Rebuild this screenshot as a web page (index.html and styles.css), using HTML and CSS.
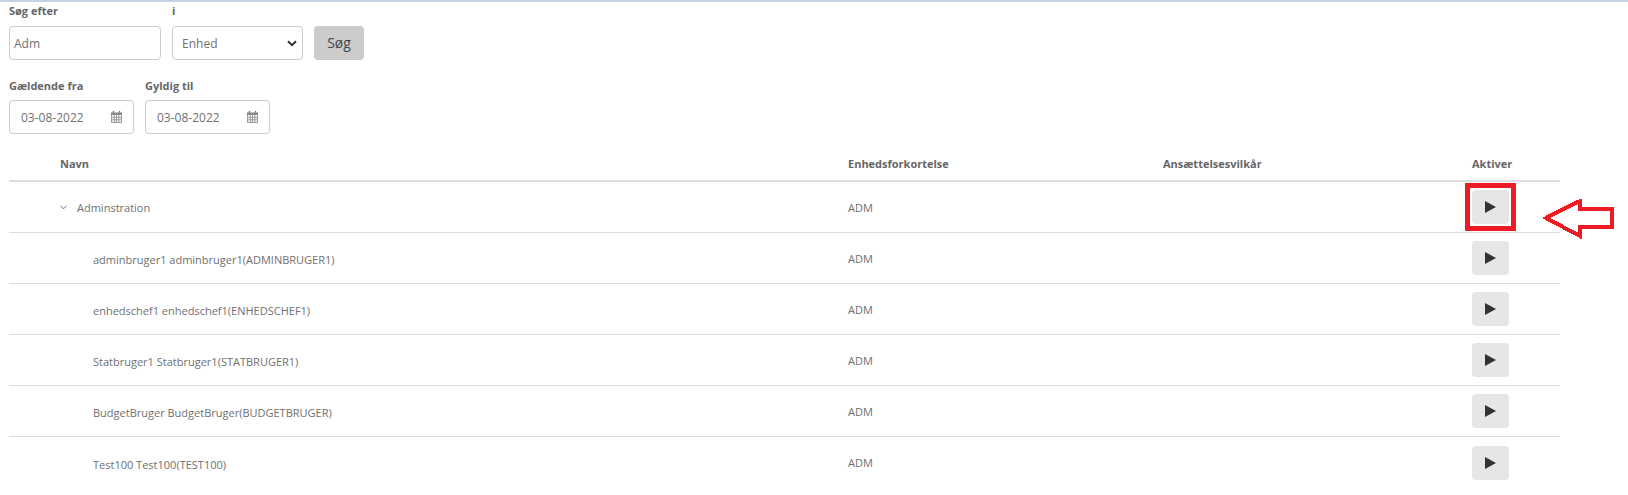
FILE: index.html
```html
<!DOCTYPE html>
<html>

<head>
  <meta charset="utf-8">
  <meta name="viewport" content="width=device-width">
  <title>Søg</title>
  <link rel="stylesheet" href="styles.css">
</head>

<body>
  <div class="page">
    <div class="filters">
      <div class="field">
        <label>Søg efter</label>
        <div class="box search-box">Adm</div>
      </div>
      <div class="field">
        <label>i</label>
        <div class="box select-box">
          <span>Enhed</span>
          <svg width="10" height="7" viewBox="0 0 10 7"><path d="M1 1.2l4 4 4-4" fill="none" stroke="#333" stroke-width="2"/></svg>
        </div>
      </div>
      <div class="search-btn">Søg</div>
    </div>

    <div class="filters dates">
      <div class="field">
        <label>Gældende fra</label>
        <div class="box date-box">
          <span>03-08-2022</span>
          <svg class="cal" width="11" height="12" viewBox="0 0 11 12"><path d="M2.5 0v2M8.5 0v2" stroke="#777" stroke-width="1.4"/><rect x="0" y="1.5" width="11" height="2.5" fill="#888"/><path d="M.5 4v7.500h10V4M.5 6.300h10M.5 8.800h10M3.200 4v7.500M5.500 4v7.500M7.800 4v7.500" fill="none" stroke="#999"/></svg>
        </div>
      </div>
      <div class="field">
        <label>Gyldig til</label>
        <div class="box date-box">
          <span>03-08-2022</span>
          <svg class="cal" width="11" height="12" viewBox="0 0 11 12"><path d="M2.5 0v2M8.5 0v2" stroke="#777" stroke-width="1.4"/><rect x="0" y="1.5" width="11" height="2.5" fill="#888"/><path d="M.5 4v7.500h10V4M.5 6.300h10M.5 8.800h10M3.200 4v7.500M5.500 4v7.500M7.800 4v7.500" fill="none" stroke="#999"/></svg>
        </div>
      </div>
    </div>

    <div class="table">
      <div class="row head">
        <div class="name">Navn</div>
        <div class="unit">Enhedsforkortelse</div>
        <div class="terms">Ansættelsesvilkår</div>
        <div class="act">Aktiver</div>
      </div>
      <div class="row">
        <div class="name parent">
          <svg width="7" height="5" viewBox="0 0 7 5"><path d="M.5 .8l3 3 3-3" fill="none" stroke="#666"/></svg>
          Adminstration
        </div>
        <div class="unit">ADM</div>
        <div class="terms"></div>
        <div class="act">
          <div class="play"><svg width="11" height="12" viewBox="0 0 11 12"><path d="M0 0l11 6-11 6z" fill="#333"/></svg></div>
          <div class="marker"></div>
        </div>
      </div>
      <div class="row">
        <div class="name child">adminbruger1 adminbruger1(ADMINBRUGER1)</div>
        <div class="unit">ADM</div>
        <div class="terms"></div>
        <div class="act"><div class="play"><svg width="11" height="12" viewBox="0 0 11 12"><path d="M0 0l11 6-11 6z" fill="#333"/></svg></div></div>
      </div>
      <div class="row">
        <div class="name child">enhedschef1 enhedschef1(ENHEDSCHEF1)</div>
        <div class="unit">ADM</div>
        <div class="terms"></div>
        <div class="act"><div class="play"><svg width="11" height="12" viewBox="0 0 11 12"><path d="M0 0l11 6-11 6z" fill="#333"/></svg></div></div>
      </div>
      <div class="row">
        <div class="name child">Statbruger1 Statbruger1(STATBRUGER1)</div>
        <div class="unit">ADM</div>
        <div class="terms"></div>
        <div class="act"><div class="play"><svg width="11" height="12" viewBox="0 0 11 12"><path d="M0 0l11 6-11 6z" fill="#333"/></svg></div></div>
      </div>
      <div class="row">
        <div class="name child">BudgetBruger BudgetBruger(BUDGETBRUGER)</div>
        <div class="unit">ADM</div>
        <div class="terms"></div>
        <div class="act"><div class="play"><svg width="11" height="12" viewBox="0 0 11 12"><path d="M0 0l11 6-11 6z" fill="#333"/></svg></div></div>
      </div>
      <div class="row last">
        <div class="name child">Test100 Test100(TEST100)</div>
        <div class="unit">ADM</div>
        <div class="terms"></div>
        <div class="act"><div class="play"><svg width="11" height="12" viewBox="0 0 11 12"><path d="M0 0l11 6-11 6z" fill="#333"/></svg></div></div>
      </div>
    </div>
  </div>

  <svg class="arrow" width="72" height="40" viewBox="0 0 72 40">
    <path d="M3 19L37 2v8h32v18H37v9z" fill="#fff" stroke="#ed1c24" stroke-width="4" shape-rendering="crispEdges"/>
  </svg>
</body>

</html>
```

FILE: styles.css
```css
* {
  margin: 0;
  box-sizing: border-box;
}

body {
  margin: 0;
  font-family: "Open Sans", sans-serif;
  font-size: 11px;
  color: #707070;
  background: #fff;
}

.page {
  border-top: 2px solid #c5d3e6;
  padding: 0 68px 0 9px;
}

/* filtre */
.filters {
  display: flex;
  align-items: flex-end;
  gap: 11px;
  padding-top: 1px;
}

.dates {
  padding-top: 17px;
}

.field label {
  display: block;
  height: 23px;
  font-weight: 700;
  color: #666;
  line-height: 15px;
}

.dates label {
  padding-top: 1px;
}

.box {
  display: flex;
  align-items: center;
  height: 34px;
  background: #fff;
  border: 1px solid #ccc;
  border-radius: 4px;
  font-size: 12px;
  color: #707070;
}

.search-box {
  width: 152px;
  padding-left: 4px;
}

.select-box {
  width: 131px;
  padding: 0 5px 0 9px;
  justify-content: space-between;
}

.search-btn {
  width: 50px;
  height: 34px;
  line-height: 33px;
  text-align: center;
  font-size: 14px;
  color: #444;
  background: #ccc;
  border-radius: 4px;
}

.date-box {
  width: 125px;
  padding: 0 11px 0 11px;
  justify-content: space-between;
}

/* tabel */
.table {
  margin-top: 21px;
}

.row {
  display: flex;
  align-items: center;
  height: 51px;
  border-bottom: 1px solid #ddd;
}

.row.head {
  height: 27px;
  align-items: flex-start;
  border-bottom: 2px solid #ddd;
  font-weight: 700;
  color: #666;
}

.row.head > div {
  line-height: 15px;
  padding-top: 1px;
}

.row.last {
  border-bottom: 0;
}

.name {
  width: 839px;
  padding-left: 51px;
}

.parent {
  display: flex;
  align-items: center;
  gap: 10px;
}

.child {
  padding-left: 84px;
  padding-top: 3px;
}

.unit {
  width: 315px;
}

.terms {
  width: 309px;
}

.act {
  position: relative;
}

.play {
  display: flex;
  align-items: center;
  justify-content: center;
  width: 37px;
  height: 34px;
  background: #e6e6e6;
  border-radius: 4px;
}

/* rød markering */
.marker {
  position: absolute;
  left: -7px;
  top: -7px;
  width: 51px;
  height: 48px;
  border: 5px solid #ed1c24;
}

.arrow {
  position: absolute;
  left: 1543px;
  top: 199px;
}
```
